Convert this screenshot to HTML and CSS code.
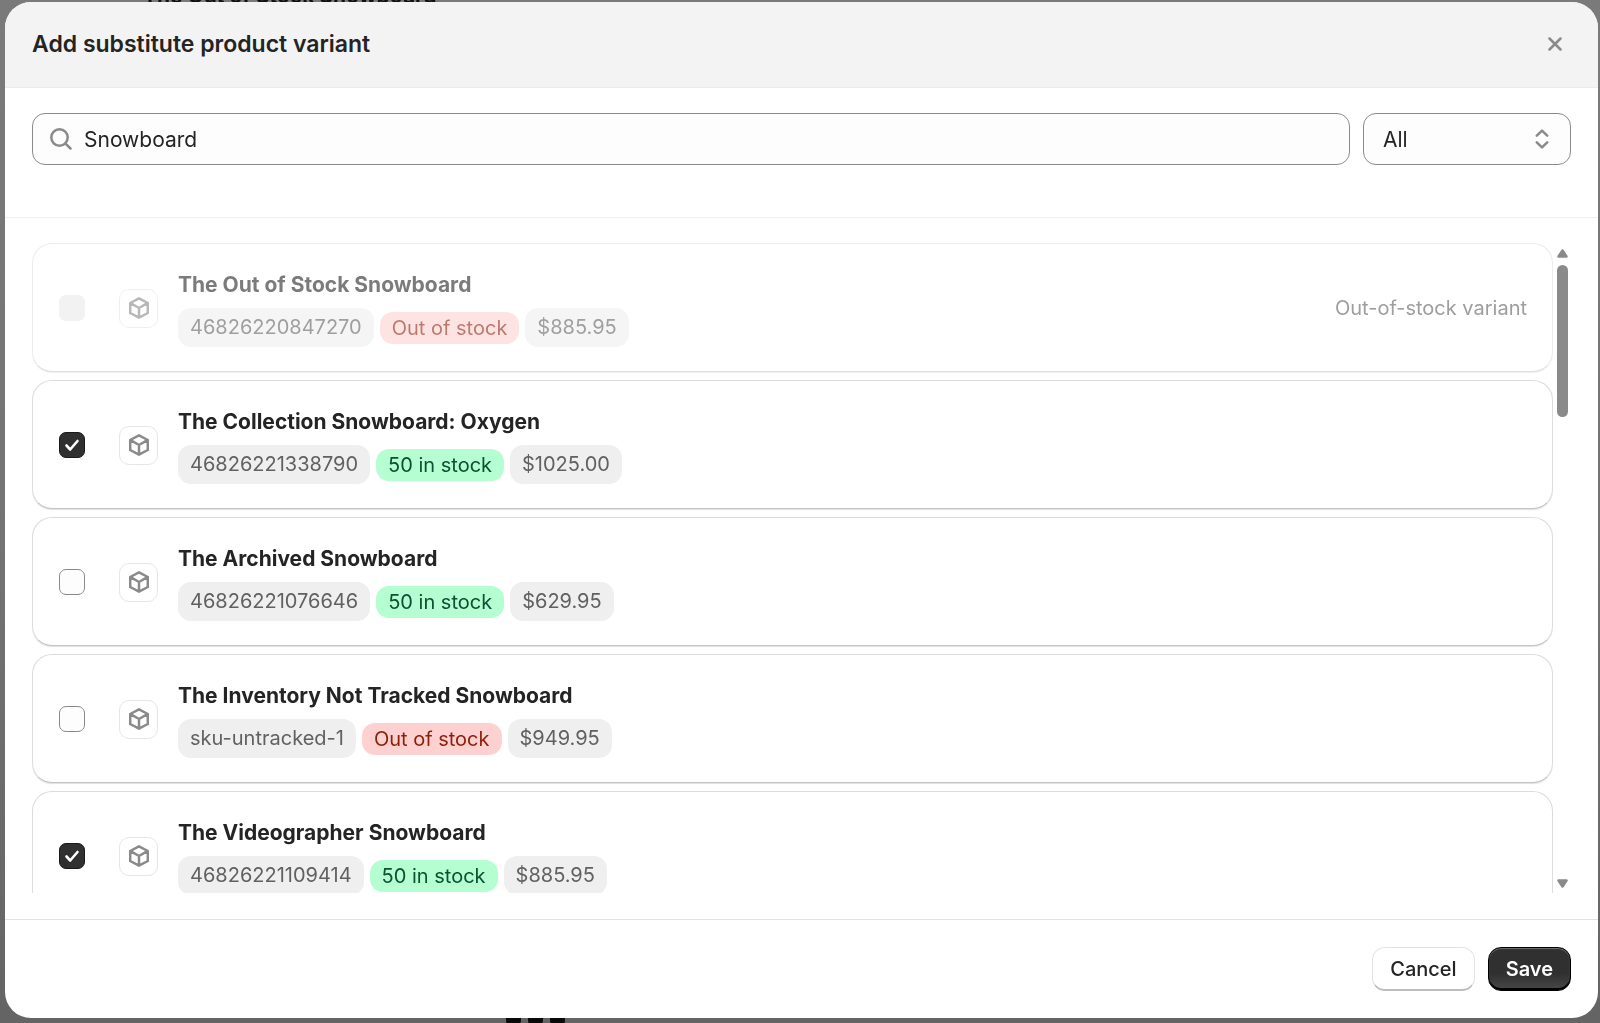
FILE: index.html
```html
<!DOCTYPE html>
<html lang="en">
<head>
    <meta charset="UTF-8">
    <meta name="viewport" content="width=device-width, initial-scale=1.0">
    <title>Add substitute product variant</title>
    <link rel="stylesheet" href="styles.css">
</head>
<body>
    <!-- icons -->
    <svg class="sprite" aria-hidden="true">
        <symbol id="cube" viewBox="0 0 20 22">
            <path d="M10 1.3 18.8 6v10L10 20.7 1.2 16V6zM1.6 6.2 10 11l8.4-4.8M10 11v9.5" />
        </symbol>
    </svg>

    <!-- page behind the dialog -->
    <div class="page" aria-hidden="true">
        <p class="page-title">The Out of Stock Snowboard</p>
        <div class="page-boards"><i></i><i></i><i></i></div>
    </div>

    <div class="modal" role="dialog" aria-labelledby="modal-title">
        <header class="modal-header">
            <h2 id="modal-title">Add substitute product variant</h2>
            <button class="close" type="button" aria-label="Close">
                <svg width="14" height="14" viewBox="0 0 14 14"><path d="M1.5 1.5l11 11M12.5 1.5l-11 11" /></svg>
            </button>
        </header>

        <div class="toolbar">
            <div class="search">
                <svg width="22" height="22" viewBox="0 0 22 22"><circle cx="9.5" cy="9.5" r="8.2" /><path d="M15.3 15.3l5.2 5.2" /></svg>
                <input type="text" value="Snowboard" aria-label="Search products">
            </div>
            <div class="filter">
                <select aria-label="Filter by">
                    <option>All</option>
                </select>
                <svg width="14" height="20" viewBox="0 0 14 20"><path d="M1.8 6.6 7 1.6l5.2 5M1.8 13.4l5.2 5 5.2-5" /></svg>
            </div>
        </div>

        <div class="results">
            <div class="list">
                <label class="card disabled">
                    <input type="checkbox" disabled>
                    <span class="thumb"><svg width="20" height="22"><use href="#cube" /></svg></span>
                    <span class="info">
                        <span class="name">The Out of Stock Snowboard</span>
                        <span class="tags">
                            <span class="tag">46826220847270</span>
                            <span class="badge critical">Out of stock</span>
                            <span class="tag">$885.95</span>
                        </span>
                    </span>
                    <span class="note">Out-of-stock variant</span>
                </label>
                <label class="card">
                    <input type="checkbox" checked>
                    <span class="thumb"><svg width="20" height="22"><use href="#cube" /></svg></span>
                    <span class="info">
                        <span class="name">The Collection Snowboard: Oxygen</span>
                        <span class="tags">
                            <span class="tag">46826221338790</span>
                            <span class="badge success">50 in stock</span>
                            <span class="tag">$1025.00</span>
                        </span>
                    </span>
                </label>
                <label class="card">
                    <input type="checkbox">
                    <span class="thumb"><svg width="20" height="22"><use href="#cube" /></svg></span>
                    <span class="info">
                        <span class="name">The Archived Snowboard</span>
                        <span class="tags">
                            <span class="tag">46826221076646</span>
                            <span class="badge success">50 in stock</span>
                            <span class="tag">$629.95</span>
                        </span>
                    </span>
                </label>
                <label class="card">
                    <input type="checkbox">
                    <span class="thumb"><svg width="20" height="22"><use href="#cube" /></svg></span>
                    <span class="info">
                        <span class="name">The Inventory Not Tracked Snowboard</span>
                        <span class="tags">
                            <span class="tag">sku-untracked-1</span>
                            <span class="badge critical">Out of stock</span>
                            <span class="tag">$949.95</span>
                        </span>
                    </span>
                </label>
                <label class="card">
                    <input type="checkbox" checked>
                    <span class="thumb"><svg width="20" height="22"><use href="#cube" /></svg></span>
                    <span class="info">
                        <span class="name">The Videographer Snowboard</span>
                        <span class="tags">
                            <span class="tag">46826221109414</span>
                            <span class="badge success">50 in stock</span>
                            <span class="tag">$885.95</span>
                        </span>
                    </span>
                </label>
            </div>
            <div class="scrollbar" aria-hidden="true">
                <svg width="11" height="9" viewBox="0 0 11 9"><path d="M5.5 1.5 9.5 7.5h-8z" /></svg>
                <div class="track"><div class="handle"></div></div>
                <svg width="11" height="9" viewBox="0 0 11 9"><path d="M5.5 7.5 9.5 1.5h-8z" /></svg>
            </div>
        </div>

        <footer class="modal-footer">
            <button class="btn" type="button">Cancel</button>
            <button class="btn primary" type="button">Save</button>
        </footer>
    </div>
</body>
</html>
```

FILE: styles.css
```css
* {
    margin: 0;
    padding: 0;
    box-sizing: border-box;
}

body {
    height: 100vh;
    overflow: hidden;
    background-color: #747474;
    font-family: Inter, "Liberation Sans", sans-serif;
    font-size: 20px;
    color: #242424;
}

svg {
    flex: none;
    fill: none;
    stroke: #8a8a8a;
    stroke-width: 2.5;
    stroke-linecap: round;
    stroke-linejoin: round;
}

.sprite {
    position: absolute;
    width: 0;
    height: 0;
}

/* page behind */
.page {
    position: fixed;
    inset: 0;
    background: linear-gradient(#7a7a7a, #747474 50%, #646464);
}

.page-title {
    position: absolute;
    top: -17px;
    left: 143px;
    font-size: 21px;
    line-height: 26px;
    font-weight: 650;
    color: #111;
}

.page-boards {
    position: absolute;
    bottom: -5px;
    left: 506px;
    display: flex;
    gap: 7px;
}

.page-boards i {
    width: 15px;
    height: 18px;
    border-radius: 0 0 8px 8px;
    background-color: #0a0a0a;
}

/* modal */
.modal {
    position: fixed;
    inset: 2px 2px 5px 5px;
    display: flex;
    flex-direction: column;
    overflow: hidden;
    border-radius: 26px;
    background-color: #fff;
}

.modal-header {
    display: flex;
    align-items: center;
    justify-content: space-between;
    height: 86px;
    padding: 0 27px 2px;
    border-bottom: 1px solid #ebebeb;
    background-color: #f3f3f3;
}

.modal-header h2 {
    font-size: 23px;
    line-height: 32px;
    font-weight: 600;
}

.close {
    display: flex;
    align-items: center;
    justify-content: center;
    width: 32px;
    height: 32px;
    border: none;
    background: none;
    cursor: pointer;
}

.toolbar {
    display: flex;
    gap: 13px;
    padding: 25px 27px 52px;
    border-bottom: 1px solid #f0f0f0;
}

.search, .filter select {
    height: 52px;
    border: 1px solid #8a8a8a;
    border-radius: 13px;
    background-color: #fdfdfd;
}

.search {
    display: flex;
    flex: 1;
    align-items: center;
    gap: 12px;
    padding: 0 17px;
}

.search input {
    flex: 1;
    border: none;
    outline: none;
    background: none;
    font: inherit;
    font-size: 21px;
    color: #242424;
}

.filter {
    position: relative;
    width: 208px;
}

.filter select {
    width: 100%;
    padding: 0 19px;
    appearance: none;
    font: inherit;
    font-size: 21px;
    color: #242424;
}

.filter svg {
    position: absolute;
    top: 16px;
    right: 22px;
    pointer-events: none;
}

/* results */
.results {
    display: flex;
    flex: 1;
    min-height: 0;
    margin: 25px 27px 26px;
}

.list {
    display: flex;
    flex: 1;
    flex-direction: column;
    gap: 8px;
    overflow: hidden;
}

.card {
    display: flex;
    flex: none;
    align-items: center;
    padding: 25px 25px 24px 26px;
    border: 1px solid #dcdcdc;
    border-bottom-color: #c4c4c4;
    border-radius: 20px;
    box-shadow: 0 1px 1px #e0e0e0;
}

.card input {
    width: 26px;
    height: 26px;
    margin-right: 34px;
    appearance: none;
    border: 1px solid #8a8a8a;
    border-radius: 7px;
    background-color: #fdfdfd;
}

.card input:checked {
    border-color: #1a1a1a;
    background: #303030 url("data:image/svg+xml,%3Csvg xmlns='http://www.w3.org/2000/svg' viewBox='0 0 24 24'%3E%3Cpath d='M6.5 12.5l3.7 4L17.5 8' fill='none' stroke='white' stroke-width='2.6' stroke-linecap='round' stroke-linejoin='round'/%3E%3C/svg%3E") center / 24px;
}

.thumb {
    display: flex;
    align-items: center;
    justify-content: center;
    width: 39px;
    height: 39px;
    margin-right: 20px;
    border: 1px solid #e6e6e6;
    border-radius: 10px;
}

.info {
    display: flex;
    flex: 1;
    flex-direction: column;
    gap: 7px;
}

.name {
    font-size: 21px;
    line-height: 32px;
    font-weight: 650;
}

.tags {
    display: flex;
    align-items: center;
    gap: 6px;
}

.tag, .badge {
    padding: 0 12px;
    border-radius: 13px;
    line-height: 32px;
}

.tag {
    background-color: #efefef;
    line-height: 39px;
    color: #616161;
}

.badge.success {
    background-color: #b4fed2;
    color: #0c5132;
}

.badge.critical {
    background-color: #fed1d1;
    color: #8e1f0b;
}

.note {
    color: #9e9e9e;
}

.card.disabled {
    border-color: #ececec;
    border-bottom-color: #dedede;
    box-shadow: 0 1px 1px #f0f0f0;
}

.card.disabled input {
    border: none;
    background-color: #f2f2f2;
}

.card.disabled .thumb, .card.disabled .info {
    opacity: 0.6;
}

/* scrollbar */
.scrollbar {
    display: flex;
    flex-direction: column;
    align-items: center;
    width: 18px;
    padding: 6px 0 5px;
}

.scrollbar svg {
    fill: #8a8a8a;
}

.track {
    flex: 1;
    width: 11px;
    padding: 7px 0;
}

.handle {
    height: 25%;
    border-radius: 6px;
    background-color: #8a8a8a;
}

/* footer */
.modal-footer {
    display: flex;
    justify-content: flex-end;
    gap: 13px;
    padding: 27px;
    border-top: 1px solid #e3e3e3;
}

.btn {
    height: 44px;
    padding: 0 17px;
    border: 1px solid #e3e3e3;
    border-bottom: 2px solid #bdbdbd;
    border-radius: 13px;
    background-color: #fff;
    font: inherit;
    font-weight: 500;
    color: #242424;
    cursor: pointer;
}

.btn.primary {
    border: 1px solid #000;
    background: linear-gradient(#303030 60%, #484848);
    box-shadow: inset 0 1px 1px #707070, inset 0 -2px 0 #000;
    font-weight: 600;
    color: #fff;
}
```
